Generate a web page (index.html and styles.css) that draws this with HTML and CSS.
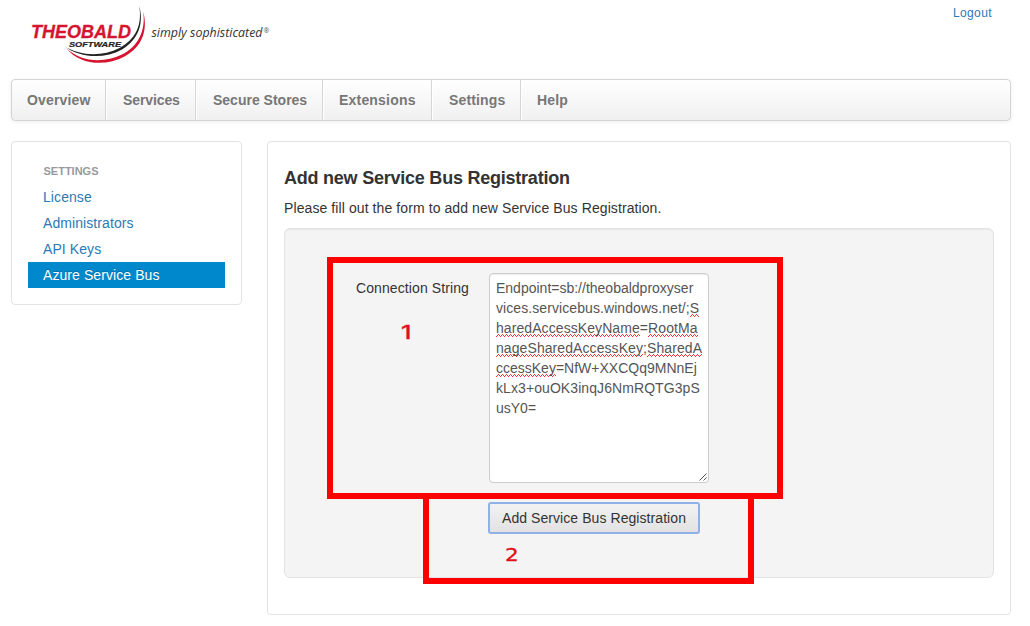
FILE: index.html
```html
<!DOCTYPE html>
<html lang="en">
<head>
<meta charset="utf-8">
<title>Service Bus Registration</title>
<link rel="stylesheet" href="styles.css">
</head>
<body>
<div class="page">
  <header class="header">
    <svg class="logo" width="260" height="70" viewBox="20 0 260 70" role="img" aria-label="Theobald Software">
      <text class="brand" x="31" y="37.500" textLength="100" lengthAdjust="spacingAndGlyphs">THEOBALD</text>
      <text class="brand-sub" x="69" y="47" textLength="52" lengthAdjust="spacingAndGlyphs">SOFTWARE</text>
      <path fill="#222" d="M139.200 6C144.500 25 137 40.500 122 49.500C104 59.500 80 58 64 46C80 56 102 57 119.500 48C135.500 39.500 142.500 25 139.200 6Z"/>
      <path fill="#d5142f" d="M143.200 11.500C148.500 32 141 47.500 124.500 56.500C106 66.500 80 65.500 66 48C81 62 103 63.500 122 54.500C138 46.500 146 31 143.200 11.500Z"/>
      <text class="slogan" x="151.500" y="37" textLength="111" lengthAdjust="spacingAndGlyphs">simply sophisticated</text>
      <text class="reg" x="263.500" y="33">®</text>
    </svg>
    <a class="logout">Logout</a>
  </header>
  <nav class="nav">
    <a class="n1">Overview</a><a class="n2">Services</a><a class="n3">Secure Stores</a><a class="n4">Extensions</a><a class="n5">Settings</a><a class="n6">Help</a>
  </nav>
  <div class="columns">
    <aside class="sidebar">
      <div class="side-title">SETTINGS</div>
      <a>License</a>
      <a>Administrators</a>
      <a>API Keys</a>
      <a class="active">Azure Service Bus</a>
    </aside>
    <main class="main">
      <h1>Add new Service Bus Registration</h1>
      <p class="intro">Please fill out the form to add new Service Bus Registration.</p>
      <div class="well">
        <div class="row">
          <label>Connection String</label>
          <div class="field">
            <div>Endpoint=sb://theobaldproxyser</div>
            <div class="wide">vices.servicebus.windows.net/;<u>S</u></div>
            <div class="wide"><u>haredAccessKeyName</u>=<u>RootMa</u></div>
            <div class="wide"><u>nageSharedAccessKey</u>;<u>SharedA</u></div>
            <div><u>ccessKey</u>=NfW+XXCQq9MNnEj</div>
            <div class="wide">kLx3+ouOK3inqJ6NmRQTG3pS</div>
            <div>usY0=</div>
            <svg class="grip" width="8" height="8" viewBox="0 0 8 8"><path d="M.5 7.500l7-7M4.500 7.500l3-3" stroke="#555" fill="none"/></svg>
          </div>
        </div>
        <button class="btn">Add Service Bus Registration</button>
      </div>
    </main>
  </div>
  <div class="mark mark-two"></div>
  <div class="mark mark-one"></div>
  <span class="num num-one">1</span>
  <span class="num num-two">2</span>
</div>
</body>
</html>
```
FILE: styles.css
```css
* { box-sizing: border-box; }
body { margin: 0; background: #fff; color: #333; font: 14px/20px "Liberation Sans", Arial, sans-serif; }
.page { position: relative; width: 1030px; height: 626px; padding: 0 19px 0 11px; overflow: hidden; }
.header { display: flex; justify-content: space-between; height: 79px; padding: 0 18px 0 9px; }
.logo { display: block; }
.brand { font: italic bold 17.5px "Liberation Sans", Arial, sans-serif; fill: #d5142f; stroke: #d5142f; stroke-width: .3px; }
.brand-sub { font: italic bold 7.5px "Liberation Sans", Arial, sans-serif; fill: #222; stroke: #222; stroke-width: .2px; }
.slogan { font: italic 12px "Open Sans", sans-serif; fill: #333; }
.reg { font: 7px "Open Sans", sans-serif; fill: #555; }
.logout { margin: 3px 1px 0 0; color: #2a7ab8; font-size: 12px; letter-spacing: .4px; }
.nav { display: flex; height: 42px; border: 1px solid #d4d4d4; border-radius: 4px; background: linear-gradient(#fff, #f0f0f0); box-shadow: 0 1px 4px rgba(0,0,0,.065); }
.nav a { padding-left: 16px; border-right: 1px solid #d6d6d6; box-shadow: 1px 0 0 #fff; color: #777; font-weight: bold; line-height: 41px; letter-spacing: .15px; white-space: nowrap; }
.nav .n1 { width: 94px; padding-left: 15px; }
.nav .n2 { width: 90px; padding-left: 17px; letter-spacing: -.1px; }
.nav .n3 { width: 127px; padding-left: 17px; letter-spacing: 0; }
.nav .n4 { width: 109px; letter-spacing: .2px; }
.nav .n5 { width: 89px; padding-left: 17px; }
.nav .n6 { border: 0; box-shadow: none; }
.columns { display: flex; align-items: flex-start; gap: 25px; margin-top: 20px; }
.sidebar { width: 231px; height: 164px; padding: 19px 16px; border: 1px solid #e3e3e3; border-radius: 4px; }
.side-title { height: 23px; padding-left: 15.5px; color: #999; font-size: 11px; font-weight: bold; letter-spacing: 0; }
.sidebar a { display: block; height: 26px; padding: 3px 15px; color: #2a7ab8; letter-spacing: .08px; }
.sidebar .active { background: #08c; color: #fff; text-shadow: 0 -1px 0 rgba(0,0,0,.2); }
.main { width: 744px; height: 474px; padding: 26px 16px 0; border: 1px solid #e3e3e3; border-radius: 4px; }
h1 { margin: 0; font-size: 18px; line-height: 20px; letter-spacing: -.23px; }
.intro { margin: 10px 0; height: 20px; letter-spacing: .09px; white-space: nowrap; }
.well { height: 350px; padding: 44px 0 0 19px; border: 1px solid #e3e3e3; border-radius: 6px; background: #f4f4f4; box-shadow: inset 0 1px 1px rgba(0,0,0,.05); }
.row { display: flex; gap: 20px; }
label { width: 165px; padding-top: 5px; letter-spacing: .1px; text-align: right; white-space: nowrap; }
.field { position: relative; width: 220px; height: 210px; padding: 4px 6px; border: 1px solid #ccc; border-radius: 4px; background: #fff; box-shadow: inset 0 1px 1px rgba(0,0,0,.075); color: #555; white-space: nowrap; }
.wide { letter-spacing: .08px; }
.field u { padding-bottom: 1px; text-decoration: none; background: linear-gradient(90deg, #e33 1px, transparent 1px) 0 100% / 4px 1px repeat-x, linear-gradient(90deg, #e33 1px, transparent 1px) 1px calc(100% - 1px) / 2px 1px repeat-x, linear-gradient(90deg, #e33 1px, transparent 1px) 2px calc(100% - 2px) / 4px 1px repeat-x; }
.grip { position: absolute; right: 1px; bottom: 1px; }
.btn { display: block; width: 212px; height: 32px; margin: 19px 0 0 184px; padding: 0; border: 2px solid #8fb1e8; border-radius: 3px; background: linear-gradient(#f2f2f2, #e2e2e2); color: #333; font: 14px/20px "Liberation Sans", Arial, sans-serif; letter-spacing: .07px; white-space: nowrap; }
.mark { position: absolute; border: 6px solid #f00; }
.mark-one { left: 327px; top: 257px; width: 456px; height: 242px; }
.mark-two { left: 423px; top: 493px; width: 331px; height: 91px; }
.num { position: absolute; color: #e0101c; font: 18px/20px "DejaVu Sans", sans-serif; -webkit-text-stroke: .3px #e0101c; transform: scaleX(1.2); transform-origin: left; }
.num-one { left: 401px; top: 323px; font-family: Inter, sans-serif; font-weight: 500; transform: scaleX(1.4); }
.num-two { left: 505px; top: 545px; }
```
